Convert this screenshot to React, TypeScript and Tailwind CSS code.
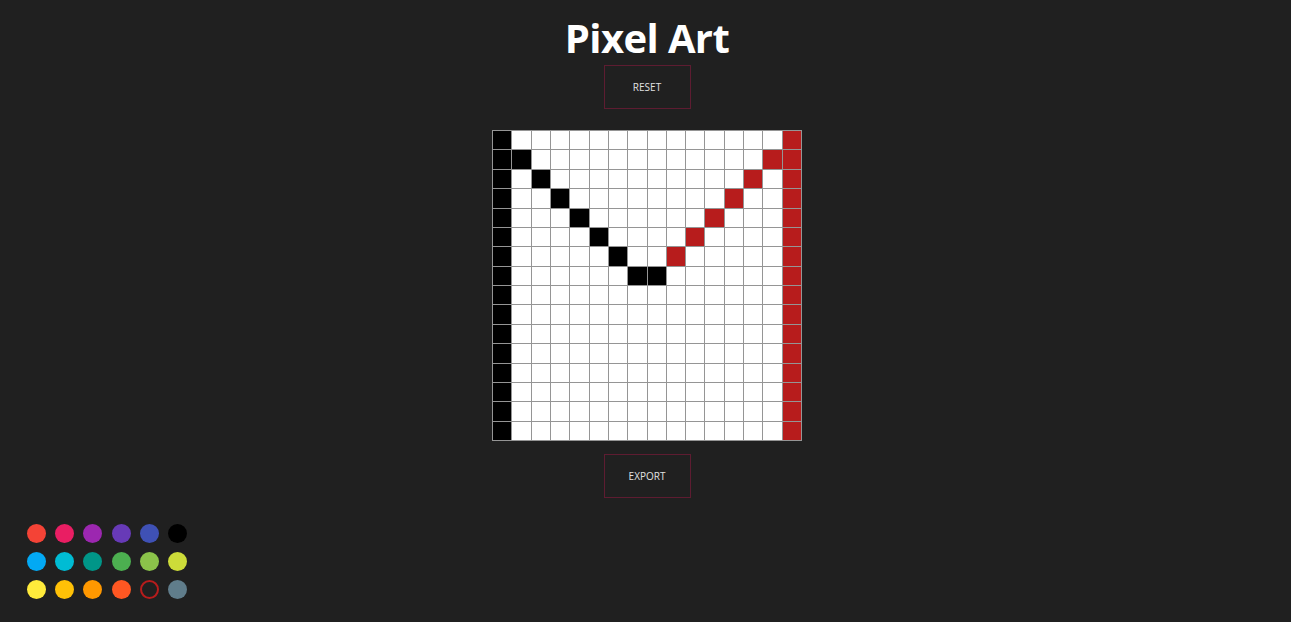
const PALETTE = [
  '#f44336', '#e91e63', '#9c27b0', '#673ab7', '#3f51b5', '#000000',
  '#03a9f4', '#00bcd4', '#009688', '#4caf50', '#8bc34a', '#cddc39',
  '#ffeb3b', '#ffc107', '#ff9800', '#ff5722', '#b71c1c', '#607d8b',
];

const SIZE = 16;
const RED = '#b71c1c';

function cellColor(r: number, c: number) {
  if (c === 0) return '#000000';
  if (c === SIZE - 1) return RED;
  // left stroke of the V
  if (r >= 1 && r <= 7 && c === r) return '#000000';
  if (r === 7 && c === 8) return '#000000';
  // right stroke of the V
  if (r >= 1 && r <= 6 && c === SIZE - 1 - r) return RED;
  return '#ffffff';
}

export default function App() {
  const selected = 16;

  return (
    <div
      className="min-h-screen w-full bg-[#202020] text-white"
      style={{ fontFamily: '"Open Sans", "Noto Sans", sans-serif' }}
    >
      <div className="flex flex-col items-center pl-[3px] pt-[12px]">
        <h1 className="text-[40px] font-bold leading-[52px] tracking-[-0.6px]">Pixel Art</h1>
        <button className="mt-[1px] h-[44px] w-[87px] border border-[#5e1c31] text-[10px] text-[#e0e0e0]">
          RESET
        </button>

        <div className="mt-[21px] grid h-[311px] w-[310px] grid-cols-16 grid-rows-16 border-l border-t border-[#959595]">
          {Array.from({ length: SIZE * SIZE }).map((_, i) => {
            const r = Math.floor(i / SIZE);
            const c = i % SIZE;
            return (
              <div
                key={i}
                className="border-b border-r border-[#959595]"
                style={{ backgroundColor: cellColor(r, c) }}
              />
            );
          })}
        </div>

        <button className="mt-[13px] h-[44px] w-[87px] border border-[#5e1c31] text-[10px] text-[#e0e0e0]">
          EXPORT
        </button>
      </div>

      <div className="mt-[26px] ml-[27px] grid w-fit grid-cols-6 gap-x-[9.2px] gap-y-[9px]">
        {PALETTE.map((color, i) =>
          i === selected ? (
            <div key={color} className="h-[19px] w-[19px] rounded-full border-2" style={{ borderColor: color }} />
          ) : (
            <div key={color} className="h-[19px] w-[19px] rounded-full" style={{ backgroundColor: color }} />
          )
        )}
      </div>
    </div>
  );
}
